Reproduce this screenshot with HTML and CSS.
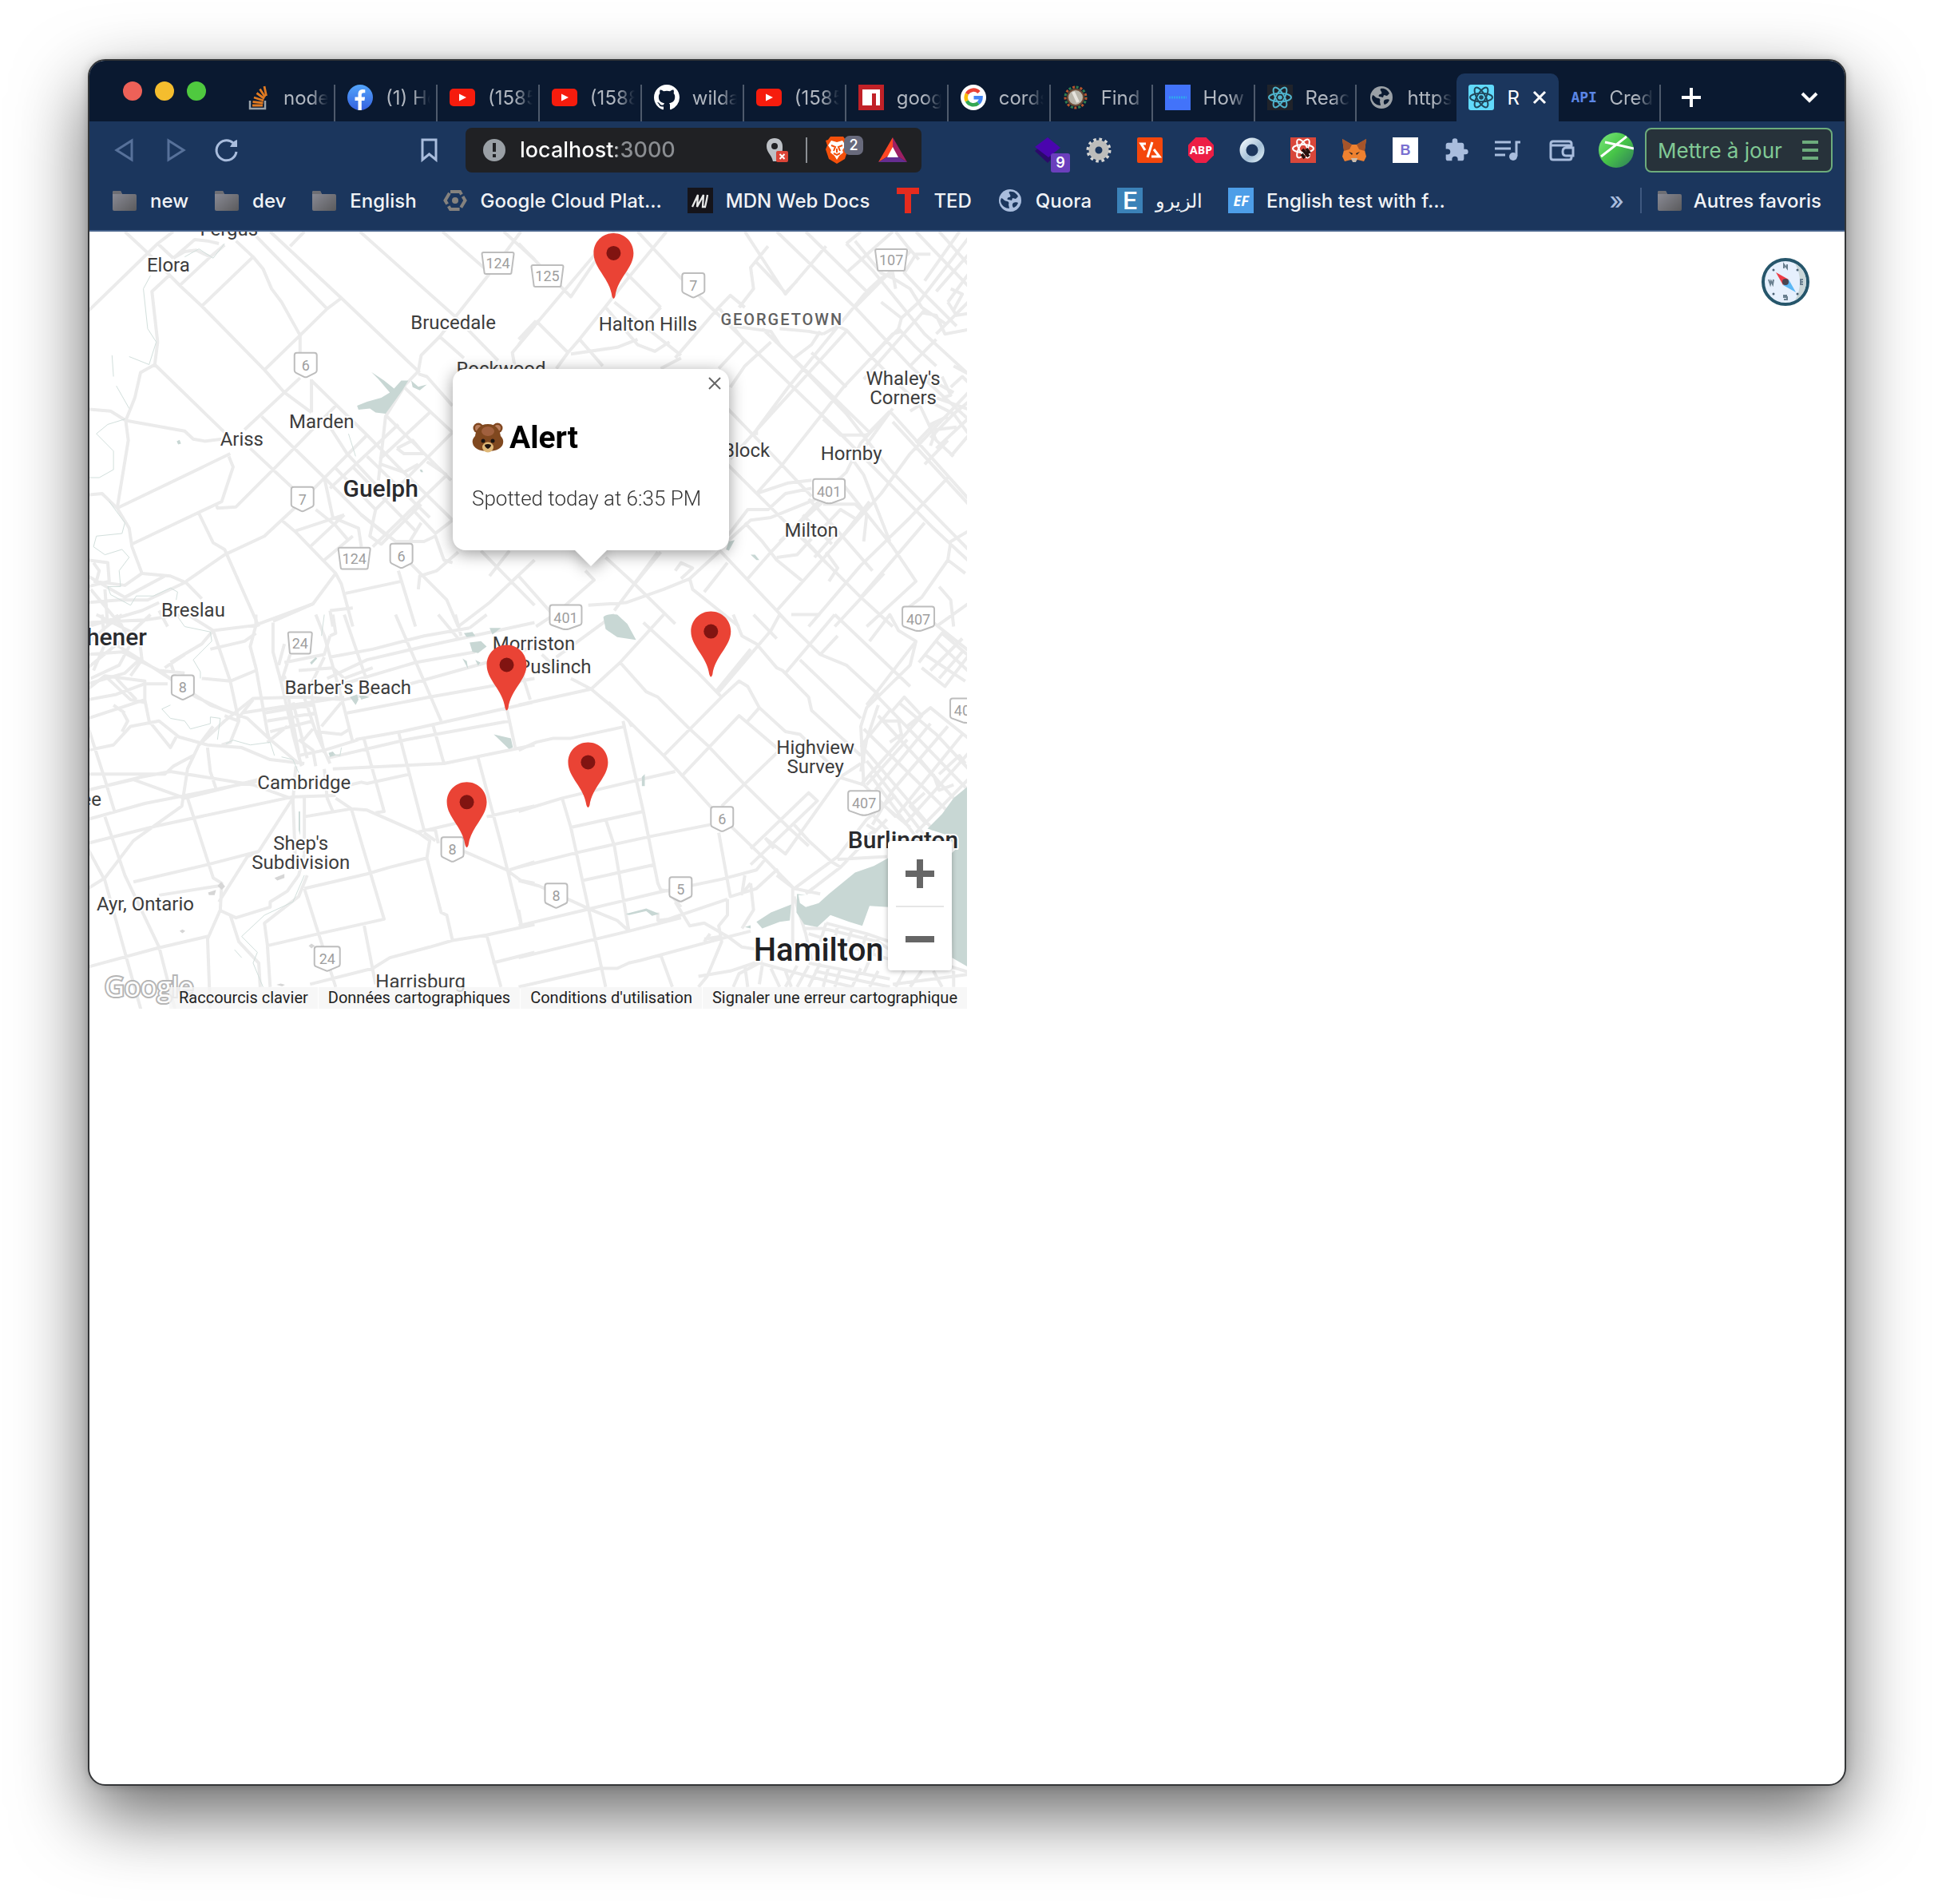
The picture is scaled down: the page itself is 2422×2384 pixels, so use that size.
FILE: index.html
```html
<!DOCTYPE html>
<html lang="fr">
<head>
<meta charset="utf-8">
<meta name="viewport" content="width=device-width">
<title>React App</title>
<link rel="stylesheet" href="styles.css">
</head>
<body>
<svg class="defs" aria-hidden="true">
  <defs>
    <linearGradient id="g-folder" x1="0" y1="0" x2="1" y2="1"><stop offset="0" stop-color="#8d8e99"/><stop offset="1" stop-color="#5a5a5c"/></linearGradient>
    <linearGradient id="g-fb" x1="0" y1="0" x2="0" y2="1"><stop offset="0" stop-color="#52a5fb"/><stop offset="1" stop-color="#3560e0"/></linearGradient>
    <linearGradient id="g-green" x1="0" y1="0" x2="1" y2="1"><stop offset="0" stop-color="#7be87c"/><stop offset=".5" stop-color="#47c548"/><stop offset="1" stop-color="#2f7a5c"/></linearGradient>
    <linearGradient id="g-ring" x1="0" y1="0" x2="1" y2="1"><stop offset="0" stop-color="#eaf3f9"/><stop offset=".6" stop-color="#a3bfd6"/><stop offset="1" stop-color="#d5e6f0"/></linearGradient>
    <symbol id="i-folder" viewBox="0 0 32 32"><path d="M1 6q0-2 2-2h8l2 4h16q2 0 2 2v17q0 2-2 2H3q-2 0-2-2z" fill="url(#g-folder)"/><path d="M1 8V6q0-2 2-2h8l2 4z" fill="#6d6e74"/></symbol>
    <symbol id="i-youtube" viewBox="0 0 32 32"><rect y="5" width="32" height="22" rx="5" fill="#f61c0d"/><path d="M12 11.500l9 4.500-9 4.500z" fill="#fff"/></symbol>
    <symbol id="i-react" viewBox="0 0 32 32"><g fill="none" stroke="currentColor" stroke-width="2"><ellipse cx="16" cy="16" rx="14" ry="5.300" transform="rotate(0 16 16)"/><ellipse cx="16" cy="16" rx="14" ry="5.300" transform="rotate(60 16 16)"/><ellipse cx="16" cy="16" rx="14" ry="5.300" transform="rotate(120 16 16)"/></g><circle cx="16" cy="16" r="2.800" fill="currentColor"/></symbol>
    <symbol id="i-globe" viewBox="0 0 32 32"><circle cx="16" cy="16" r="14" fill="currentColor"/><path d="M5 13c3 1 4 4 7 4 2 0 3 2 2 4l1 5c-6 0-11-5-11-10zM15 5c5-1 9 2 11 6l-3 3-4-1-1 3-4-1c-2 0-2-2 0-3 2 0 3-1 2-3s-2-2-1-4zM20 19c2-1 5-1 6 0-1 3-3 5-6 6-1-1-2-4 0-6z"/></symbol>
    <path id="pin" d="M0 0C-14 0-25 11-25 25C-25 44-5 56-2 79Q-1 82 0 82Q1 82 2 79C5 56 25 44 25 25C25 11 14 0 0 0Z"/>
    <path id="s1" d="M-14 3q0-3 3-3h22q3 0 3 3v19q0 2-2 3l-10 5q-2 1-4 0l-10-5q-2-1-2-3z"/>
    <path id="s2" d="M-16 3q0-3 3-3h26q3 0 3 3v19q0 2-2 3l-12 5q-2 1-4 0l-12-5q-2-1-2-3z"/>
    <path id="s3" d="M-20 3q0-3 3-3h34q3 0 3 3v19q0 2-2 3l-14 5q-4 1-8 0l-14-5q-2-1-2-3z"/>
    <path id="t2" d="M-15 2q0-2 2-2h26q2 0 2 2l-2 23q0 2-2 2h-22q-2 0-2-2z"/>
    <path id="t3" d="M-20 2q0-2 2-2h36q2 0 2 2l-3 23q0 2-2 2h-30q-2 0-2-2z"/>
  </defs>
</svg>

<div class="window">
  <header class="chrome">
    <div class="tabstrip">
      <div class="lights"><button class="light red" aria-label="Fermer"></button><button class="light yellow" aria-label="Réduire"></button><button class="light green" aria-label="Agrandir"></button></div>
      <nav class="tabs" aria-label="Onglets">
        <a class="tab" href="#"><svg class="icon" viewBox="0 0 32 32"><path d="M6 20v10h19V20" fill="none" stroke="#9ba3aa" stroke-width="2.500"/><g stroke="#e07a22" stroke-width="2.800"><path d="M9 26h13M9.500 21.500l13 1.300M11 16l12 4M14.500 10.500l9.500 7M18.500 5.500l6.500 10M24 2l2.500 12"/></g></svg><span>node.js</span></a>
        <a class="tab" href="#"><svg class="icon" viewBox="0 0 32 32"><circle cx="16" cy="16" r="16" fill="url(#g-fb)"/><path d="M13.500 32V20H9.500v-4.500h4V12c0-4 2.300-6 5.800-6l3 .3v4h-2c-2 0-2.500 1-2.500 2.300v2.900h4.300l-.7 4.500h-3.600v12z" fill="#fff"/></svg><span>(1) Home</span></a>
        <a class="tab" href="#"><svg class="icon"><use href="#i-youtube"/></svg><span>(1585)</span></a>
        <a class="tab" href="#"><svg class="icon"><use href="#i-youtube"/></svg><span>(1588)</span></a>
        <a class="tab" href="#"><svg class="icon" viewBox="0 0 16 16"><path fill="#fff" d="M8 0C3.580 0 0 3.580 0 8c0 3.540 2.290 6.530 5.470 7.590.4.070.55-.17.55-.38 0-.19-.01-.82-.01-1.490-2.010.37-2.530-.49-2.690-.94-.09-.23-.48-.94-.82-1.130-.28-.15-.68-.52-.01-.53.63-.01 1.080.58 1.230.82.72 1.210 1.870.87 2.330.66.070-.52.28-.87.51-1.070-1.780-.2-3.640-.89-3.640-3.950 0-.87.31-1.590.82-2.150-.08-.2-.36-1.020.08-2.120 0 0 .67-.21 2.200.82.640-.18 1.320-.27 2-.27s1.360.09 2 .27c1.530-1.040 2.200-.82 2.200-.82.440 1.100.16 1.920.08 2.120.51.560.82 1.270.82 2.150 0 3.070-1.870 3.750-3.650 3.950.29.25.54.73.54 1.480 0 1.070-.01 1.930-.01 2.200 0 .21.15.46.55.38A8.010 8.010 0 0 0 16 8c0-4.420-3.580-8-8-8z"/></svg><span>wildash</span></a>
        <a class="tab" href="#"><svg class="icon"><use href="#i-youtube"/></svg><span>(1585)</span></a>
        <a class="tab" href="#"><svg class="icon" viewBox="0 0 32 32"><path fill="#c12127" d="M0 0h32v32H0z"/><path fill="#fff" d="M5 6h22v20h-5V11h-5v15H5z"/></svg><span>google-m</span></a>
        <a class="tab" href="#"><svg class="icon" viewBox="0 0 32 32"><circle cx="16" cy="16" r="16" fill="#fff"/><g fill="none" stroke-width="4.500"><path d="M23 9.500A9.500 9.500 0 0 0 7.800 11.500" stroke="#ea4335"/><path d="M7.800 11.500a9.500 9.500 0 0 0 0 9" stroke="#fbbc05"/><path d="M7.800 20.500A9.500 9.500 0 0 0 22.300 23" stroke="#34a853"/><path d="M22.300 23a9.500 9.500 0 0 0 3.200-6.800H16.500" stroke="#4285f4"/></g></svg><span>cords</span></a>
        <a class="tab" href="#"><svg class="icon" viewBox="0 0 32 32"><g stroke-width="3" stroke-dasharray="3 6.500" fill="none"><circle cx="16" cy="16" r="13" stroke="#b7552c"/><circle cx="16" cy="16" r="13" stroke="#2f7d4f" stroke-dashoffset="5"/></g><circle cx="16" cy="16" r="10" fill="#b9b6ab" stroke="#6b4a35" stroke-width="2"/><path d="M13 9l6 13" stroke="#e6e4dd" stroke-width="4"/></svg><span>Find L</span></a>
        <a class="tab" href="#"><svg class="icon" viewBox="0 0 32 32"><path fill="#4273fa" d="M0 0h32v32H0z"/><path d="M5 16h22" stroke="#31a6ee" stroke-width="3" stroke-dasharray="2 1"/></svg><span>How t</span></a>
        <a class="tab" href="#"><svg class="icon react-dark"><use href="#i-react"/></svg><span>React N</span></a>
        <a class="tab plain" href="#"><svg class="icon globe-gray"><use href="#i-globe"/></svg><span>https://</span></a>
        <a class="tab active" href="#" aria-current="page"><svg class="icon react-light"><use href="#i-react"/></svg><span>R</span><svg class="tab-close" viewBox="0 0 18 18"><path d="M2 2l14 14M16 2L2 16"/></svg></a>
        <a class="tab" href="#"><b class="icon api">API</b><span>Creden</span></a>
      </nav>
      <button class="newtab" aria-label="Nouvel onglet"><svg viewBox="0 0 26 26"><path d="M13 1v24M1 13h24"/></svg></button>
      <button class="tabmenu" aria-label="Liste des onglets"><svg viewBox="0 0 26 26"><path d="M4 8l9 9 9-9"/></svg></button>
    </div>

    <div class="toolbar">
      <div class="nav">
        <button class="tool dim" aria-label="Précédent"><svg viewBox="0 0 32 32"><path d="M25 4v24L6 16z"/></svg></button>
        <button class="tool dim" aria-label="Suivant"><svg viewBox="0 0 32 32"><path d="M7 4v24l19-12z"/></svg></button>
        <button class="tool" aria-label="Actualiser"><svg viewBox="0 0 32 32"><path d="M28 18A12.500 12.500 0 1 1 24 7"/><path d="M20 12l9 0V3q-5 1-9 9z" fill="currentColor" stroke="none"/></svg></button>
      </div>
      <button class="tool mark" aria-label="Ajouter aux favoris"><svg viewBox="0 0 32 32"><path d="M7 3h17v25l-8.500-7L7 28z"/></svg></button>
      <div class="urlbar">
        <svg class="info" viewBox="0 0 28 28"><circle cx="14" cy="14" r="14" fill="#9aa0a6"/><path d="M14 5v11M14 19v4" stroke="#202124" stroke-width="4"/></svg>
        <label class="sr" for="url">Adresse</label><input id="url" class="url" value="localhost:3000">
        <svg class="loc" viewBox="0 0 28 32"><path d="M11 1C5 1 1 5 1 11c0 8 6 10 8 19l5 0V20h6c1-3 1-5 1-9C21 5 17 1 11 1z" fill="#bdc1c6"/><circle cx="11" cy="11" r="4" fill="#202124"/><rect x="13" y="17" width="15" height="14" rx="2" fill="#db4437"/><path d="M17.500 21l6 6m0-6l-6 6" stroke="#fff" stroke-width="2"/></svg>
        <i class="rule"></i>
        <span class="brave"><svg viewBox="0 0 30 36"><path d="M7 1h16l3 4 3 1-2 6 2 5-4 12-10 6L5 29 1 17l2-5-2-6 3-1z" fill="#f4500b"/><path d="M8 6l7 2 7-2 4 6-4 6 1 3-5 4-3 5-3-5-5-4 1-3-4-6z" fill="#fff"/><path d="M8 12l5 2-2 5M22 12l-5 2 2 5M11 22l4 2 4-2M15 16v5" stroke="#f4500b" stroke-width="2" fill="none"/></svg><b>2</b></span>
        <svg class="bat" viewBox="0 0 36 32"><path d="M18 0L0 31l18-11z" fill="#ff4724"/><path d="M18 0l18 31-18-11z" fill="#9e1f63"/><path d="M0 31h36L18 20z" fill="#662d91"/><path d="M18 12l7 13H11z" fill="#fff"/></svg>
      </div>
      <div class="extensions">
        <button class="tool" aria-label="Extension 1"><svg viewBox="0 0 32 32"><path d="M0 17l6-5 16 14-6 6z" fill="#2b0a6b" stroke="none"/><path d="M16 0l16 13-15 12L0 12z" fill="#4a05ae" stroke="none"/></svg><b class="badge">9</b></button>
        <button class="tool" aria-label="Réglages"><svg viewBox="0 0 32 32"><circle cx="16" cy="16" r="13.500" stroke="#d6d6d4" stroke-width="4" stroke-dasharray="3.500 3.570"/><circle cx="16" cy="16" r="8.500" stroke="#bdbdbb" stroke-width="8"/></svg></button>
        <button class="tool" aria-label="Extension 3"><svg viewBox="0 0 32 32"><rect width="32" height="32" rx="2" fill="#f4470c" stroke="none"/><path d="M11 8H5l5 8M19 6l-6 19M18 24h10l-7-9" stroke="#fff" stroke-width="3"/></svg></button>
        <button class="tool" aria-label="Adblock Plus"><svg viewBox="0 0 32 32"><path d="M9.500 0h13L32 9.500v13L22.500 32h-13L0 22.500v-13z" fill="#ed1e45" stroke="none"/></svg><b class="abp">ABP</b></button>
        <button class="tool" aria-label="Extension 5"><svg viewBox="0 0 32 32"><circle cx="16" cy="16" r="11.500" stroke="url(#g-ring)" stroke-width="8"/></svg></button>
        <button class="tool" aria-label="React DevTools"><svg viewBox="0 0 32 32"><path fill="#d9473a" stroke="none" d="M0 0h32v32H0z"/><g stroke="#fff" stroke-width="2"><ellipse cx="16" cy="14" rx="13" ry="5"/><ellipse cx="16" cy="14" rx="13" ry="5" transform="rotate(60 16 14)"/><ellipse cx="16" cy="14" rx="13" ry="5" transform="rotate(120 16 14)"/></g><path d="M15 15l8 9M14 21l4 5M20 14l4 6" stroke="#26100e" stroke-width="4"/></svg></button>
        <button class="tool" aria-label="MetaMask"><svg viewBox="0 0 32 32"><g stroke="none"><path d="M1 2l12 7h6l12-7-2 14 2 8-3 6-8-2-4 3-4-3-8 2-3-6 2-8z" fill="#ee8130"/><path d="M1 2l12 7-3 6-7 2zM31 2L19 9l3 6 7 2z" fill="#a5542a"/><path d="M9 18l5 2-1 2zM23 18l-5 2 1 2z" fill="#222"/><path d="M12 26h8l-2 5h-4z" fill="#c9bcae"/></g></svg></button>
        <button class="tool" aria-label="Extension 8"><b class="b-ext">B</b></button>
        <button class="tool" aria-label="Extensions"><svg viewBox="0 0 24 24"><path fill="currentColor" stroke="none" d="M20.500 11H19V7c0-1.100-.9-2-2-2h-4V3.500a2.500 2.500 0 0 0-5 0V5H4c-1.100 0-2 .9-2 2v3.800h1.500a2.700 2.700 0 0 1 0 5.400H2V20c0 1.100.9 2 2 2h3.800v-1.500a2.700 2.700 0 0 1 5.400 0V22H17c1.100 0 2-.9 2-2v-4h1.500a2.500 2.500 0 0 0 0-5z"/></svg></button>
        <button class="tool" aria-label="Médias"><svg viewBox="0 0 32 32"><path d="M0 6h20M0 14h20M0 22h13M27 24V6h5" stroke-width="3"/><circle cx="23" cy="24" r="5" fill="currentColor" stroke="none"/></svg></button>
        <button class="tool wallet" aria-label="Portefeuille"><svg viewBox="0 0 32 32"><path d="M28 11V8q0-3-3-3H5Q2 5 2 8v17q0 3 3 3h20q3 0 3-3v-2M3 10h22q3 0 3 2M21 13h9v10h-9q-4 0-4-5t4-5z"/></svg></button>
        <button class="profile" aria-label="Profil"><svg viewBox="0 0 44 44"><circle cx="22" cy="22" r="22" fill="url(#g-green)"/><path d="M3 30L35 5M8 12l36 8" stroke="#fff" stroke-width="3"/></svg></button>
        <button class="update">Mettre à jour<svg viewBox="0 0 20 24"><path d="M0 2h20M0 12h20M0 22h20"/></svg></button>
      </div>
    </div>

    <nav class="bookmarks" aria-label="Favoris">
      <a href="#"><svg class="icon"><use href="#i-folder"/></svg>new</a>
      <a href="#"><svg class="icon"><use href="#i-folder"/></svg>dev</a>
      <a href="#"><svg class="icon"><use href="#i-folder"/></svg>English</a>
      <a href="#"><svg class="icon" viewBox="0 0 32 32"><path d="M10 5h12l6.500 11L22 27H10L3.500 16z" fill="none" stroke="#85827e" stroke-width="4" stroke-dasharray="16 3"/><circle cx="16" cy="16" r="4" fill="#85827e"/></svg>Google Cloud Plat...</a>
      <a href="#"><svg class="icon" viewBox="0 0 32 32"><path fill="#15141a" d="M0 0h32v32H0z"/><path d="M6 24l7-15-1 15 8-15-1 15h3q2-8 3-15" fill="none" stroke="#e8e8e8" stroke-width="2.300"/></svg>MDN Web Docs</a>
      <a href="#"><svg class="icon" viewBox="0 0 32 32"><path d="M2 0h28v8H20v24h-8V8H2z" fill="#e62b1e"/></svg>TED</a>
      <a href="#"><svg class="icon globe-blue"><use href="#i-globe"/></svg>Quora</a>
      <a href="#"><b class="icon e-ico">E</b><span lang="ar" dir="rtl">الزيرو</span></a>
      <a href="#"><b class="icon ef-ico">EF</b>English test with f...</a>
      <button class="more" aria-label="Plus de favoris">»</button>
      <a class="others" href="#"><svg class="icon"><use href="#i-folder"/></svg>Autres favoris</a>
    </nav>
  </header>

  <main class="page">
    <section class="map" aria-label="Carte">
      <svg class="canvas" viewBox="0 0 1100 974" preserveAspectRatio="xMidYMid slice">
        <g class="roads">
          <!-- north-west quarter: Elora, Guelph -->
          <g transform="matrix(.3571 0 0 .3333 -2 -5)">
            <path d="M0 315L245 60L300 15M130 15L215 100L325 220L400 295L620 535L690 620L785 695M245 60L300 115M285 180L225 240L245 430L235 515L185 545L165 640L133 725L142 800L103 1055L145 1130L155 1200L190 1300L290 1310L345 1335L400 1395M300 115L375 45L420 50L460 60M325 215L430 110L480 65M300 115L340 90L380 85L430 110M400 295L580 110M520 50L580 110L615 155L645 230L680 280L745 405L745 470M575 15L840 305L890 265L640 15M890 265L1165 545M620 535L745 405L840 305M710 70L760 15M955 15L1290 335L1440 500M1245 15L1400 160M1460 15L1568 120M1520 15L1405 180L1235 410L1170 480L1160 540L1115 590L1045 710L1020 950M1235 410L1320 490M1568 370L1490 470L1500 530M235 515L480 770M0 683L80 690L133 725L340 765L370 795L410 803L470 795M550 760L745 565M785 570L785 695M785 575L980 780L1090 900L1280 1100M610 710L830 940L960 1080L1050 1160M850 750L910 850L1010 965M570 830L725 985M103 1055L500 850M495 860L510 900L470 1030L155 1190M870 670L655 905L520 1050L455 1055L450 1035M390 1075L440 1185L480 1210L600 1500M680 1100L730 1145L870 1300L890 1340L930 1500M345 1330L480 1230L620 1160L720 1060L850 920L980 780M870 1300L790 1415L600 1490M905 1375L1100 1330M1090 1290L1150 1500M1130 1260L1260 1400L1300 1500M1160 1360L1165 1310L1225 1290L1300 1220M1380 1215L1568 1420M1300 1500L1410 1410L1568 1250M1480 1215L1410 1310"/>
            <path d="M1110 600L1280 770M1050 710L1275 950M1090 740L850 980M1200 695L1025 870M980 860L1200 1090M930 900L1150 1140M1280 770L1010 1060M1260 930L1000 1200M1085 830L1140 800L1180 850L1110 850L1085 830M1160 550L1190 560L1280 670M870 905L1010 1060L990 1160L1030 1190L1170 1040M830 940L860 1090L950 1130L960 1200M800 1060L870 1120L910 1170M900 1080L730 1140M780 1200L900 1080M1030 890L1110 920L1160 890M830 1250L930 1160M1190 880L1260 930M960 1080L1080 1180L1180 1180L1220 1160L1250 1250L1280 1260M1140 1060L1220 1150L1280 1100M1130 1180L1170 1110M0 1250L70 1260L75 1330L0 1350M190 1300L130 1345L20 1330M20 1260L40 1290L30 1330M0 1310L130 1390L270 1310M60 1360L70 1500M0 1410L110 1400L210 1400L340 1335M0 1500L190 1440L250 1410M10 1360L120 1500M250 1440L280 1500M850 1440L930 1430M850 1440L860 1500M650 1480L790 1415M0 1005L50 1000L103 1055"/>
          </g>
          <!-- north-east quarter: Georgetown, Milton -->
          <g transform="matrix(.3635 0 0 .3333 538 -5)">
            <path d="M0 60L180 260L330 20M0 440L310 40L330 15M410 15L560 190L780 425L1060 720L1430 1130L1568 1270M510 15L370 200L210 420L170 470L60 350M60 350L0 420M170 470L130 530M180 475L340 450L410 420M210 420L290 520M370 170L490 300M300 300L410 440L470 465L520 430M330 280L560 480M490 300L430 370M540 490L690 300L730 255L780 300M690 300L780 430M490 530L560 490M780 15L920 250L1060 70M860 70L800 150L810 230L760 300M820 130L920 245L960 200M890 15L1160 300L1350 520L1560 730M990 15L1200 240M780 425L690 530M870 430L780 520L730 600M740 370L870 390L900 440L1130 700L1280 910L1568 1230M840 380L1060 610L1210 770M900 380L1000 390L1050 400M1010 470L1130 600M1040 390L1010 440L950 490M1130 390L730 870M1050 400L1100 370L1130 385L1220 490L1310 590M1200 240L930 600L820 760L820 780M1310 380L1120 600L910 890L820 1000M1400 310L1190 570M1220 480L1290 400L1320 390M720 680L880 860L1010 1010M1160 300L1350 90M1280 690L1200 780L1110 780L1050 720M1280 690L1180 810L1130 920L1080 970M1290 680L1190 830M1280 690L1568 1040M1290 730L1568 1060M720 890L1180 1390L1290 1500M820 1000L930 960L1010 950M720 1160L790 1060L860 1060L920 1000L1010 980M720 1180L800 1100L870 1090L960 1050L1050 1010M780 1110L840 1180L890 1250L980 1330M300 1240L400 1340L540 1490M230 1290L260 1325L130 1450L60 1500M0 1310L130 1470M480 1220L330 1440M240 1420L370 1410L500 1360L590 1320L690 1220M540 1290L560 1260L600 1280L560 1320M590 1320L600 1360L760 1500M690 1210L890 1440L940 1500M640 1370L720 1260M400 1340L490 1220M790 1320L870 1220L1060 1000M890 1440L1250 1000L1350 850L1568 600M980 1330L1110 1170L1210 1030M1000 1500L1180 1270L1350 1090L1480 940M1090 1500L1260 1300M1180 1390L1400 1110M1100 940L1290 1200L1370 1330L1200 1500M1480 1250L1390 1390L1330 1440M1540 1300L1480 1250L1490 1180L1568 1130M1450 1350L1490 1400L1500 1500M1568 1400L1440 1500M1150 870L1190 930L1280 1180"/>
            <path d="M1130 60L1180 15M1130 60L1220 160L1400 400L1560 560M1160 50L1250 170L1290 190L1350 230L1390 300L1470 360M1130 170L1290 15M1200 240L1250 190L1290 170L1300 230M1380 120L1340 70L1300 15M1420 100L1370 100L1330 170L1390 240L1510 370M1370 15L1568 240M1450 15L1568 160M1520 15L1400 200M1568 80L1440 240M1568 150L1480 280M1250 280L1320 340L1380 280L1568 15M1320 340L1310 380L1370 450L1440 520M1390 320L1440 330L1470 400L1568 380M1440 400L1568 260M1480 280L1510 330L1568 320M1490 230L1530 250L1500 310M1350 520L1440 420M1400 560L1500 620M1310 590L1380 660L1440 800L1500 860M1350 690L1410 650L1500 700L1568 640M1420 740L1480 710M1420 790L1500 700L1568 800M1440 830L1568 700M1490 860L1568 760M1370 810L1440 730M1400 890L1480 800M1500 520L1568 560M1460 560L1490 630L1460 640M1440 640L1568 690M1490 600L1530 560L1568 600M1420 820L1440 760L1510 750M1000 1020L1100 1140L1220 1290M980 1080L1080 1190M950 1130L1060 1260M1050 1040L1160 1040L1200 1080L1190 1180M1040 1140L1110 1060L1170 1100M900 1180L1000 1080L1060 1020M890 1240L960 1230L1010 1170M1090 1190L1150 1120M1060 1220L1100 1280L1070 1330M1100 1140L1020 1240"/>
          </g>
          <!-- south-west quarter: Kitchener, Cambridge -->
          <g transform="matrix(.3571 0 0 .3333 -2 480)">
            <path d="M0 660L190 610L290 590L580 640L710 690M0 660L160 620L340 690L600 620M0 770L200 710L600 625M0 860L240 795L720 685L870 680M0 1030L60 990L160 850L330 720L350 580L390 490L480 400L580 315L750 310L900 320L1100 270L1400 180L1568 120M0 510L90 490L150 420L250 400L320 460L420 490L540 500L640 545L760 560M0 390L200 320L200 250L60 230L0 280M200 320L215 400L290 500L310 460M0 420L60 620L95 745M60 760L130 980L250 1250L310 1500M0 880L60 1000L190 1500M160 1005L420 940L600 890L720 690M0 1325L240 1255L420 1210L430 1500M350 690L440 990L470 1010L465 1110L420 1220M460 1110L520 1140L640 1100L640 1080L700 1040L740 980L760 900L760 690M250 1055L460 1020M460 1080L560 910L600 890M420 500L430 590L450 655M0 600L270 600L300 570L370 530M630 1245L810 1200L1040 1145L925 730L760 760M640 1400L630 1240L620 1160L740 1060L770 980M500 1130L530 1230L600 1310L605 1400M760 1030L980 975L1060 950L1190 915L1200 850L1160 820L980 735L925 730L870 690M760 1030L810 1200L870 1400M780 1390L1000 1330L1060 1290L1200 1250L1280 1225L1400 1205L1568 1165M1190 915L1240 1120L1260 1130L1280 1225M970 1170L1010 1390M1400 1205L1450 1400M1420 1310L1568 1270M1150 820L1350 770M970 470L1040 740L1010 745M1090 440L1180 810L1220 810L1230 860M1320 890L1470 960L1520 1000L1568 1010M1480 960L1568 930M1370 540L1450 860L1520 1165M1400 760L1568 720M1210 410L1250 560M840 540L1120 470L1480 400M860 580L1250 560L1568 490M940 470L1100 440L1560 330M910 370L1200 310L1568 240M1470 350L1500 500M920 640L960 630L980 635L1130 600M740 530L830 510L950 470M930 480L890 310L830 80L800 0M850 160L1000 130L1180 80L1340 50M870 270L960 240L1150 180L1360 140M900 0L980 250M1080 0L1240 400M1230 0L1300 90M1290 0L1310 80M840 240L980 170L1180 120L1568 30M1340 50L1400 0"/>
            <path d="M590 40L570 120L590 200L630 440L640 480M650 30L650 140L680 260L720 450L750 570M350 0L440 60L500 250L530 400L500 480L470 490M0 60L110 120L230 200L430 340L560 390L640 470L740 560M0 150L120 140L250 210L380 310L480 360M0 200L80 130L160 60L220 0M0 110L60 50L120 0M30 0L180 80L190 170L150 230M0 30L200 20L330 0M50 0L60 110L20 210M100 0L150 110L110 190L10 240M0 260L130 220L180 170M60 230L150 320L200 330M100 240L170 320M0 320L100 300L200 260L280 260M290 180L400 110L440 60L590 40L590 0M290 180L310 240M250 210L340 220M340 150L270 200M430 130L550 100L590 70M400 240L500 250L590 210M540 370L900 310M520 400L580 320M620 370L730 350L790 340M630 400L800 370M640 440L790 400M690 230L740 520M720 330L770 540M750 280L800 440L850 560M780 280L830 520M680 250L710 150M690 180L830 150L850 80M740 210L860 200L900 240L1000 200M800 440L890 450L920 430M820 420L890 330M750 480L790 430M740 470L790 510L800 570M630 480L700 420M690 110L670 190M850 80L870 70L860 0M830 160L780 270M900 240L870 310M840 690L860 740M730 570L720 700L730 960M830 580L840 690M120 360L140 400L120 440M90 340L130 370M440 420L390 490M530 400L480 380M1180 820L1220 850"/>
          </g>
          <!-- south-east quarter: Hamilton, Burlington -->
          <g transform="matrix(.3635 0 0 .3333 538 480)">
            <path d="M0 340L250 280L350 180L500 0M0 180L40 320M180 240L250 280L370 390L500 530L560 600L660 720L850 920L950 1030M80 150L130 200M130 160L330 0M0 510L60 480L120 465L180 465L370 420M360 400L430 740L480 1010L490 1035L520 1040M310 330L380 400L390 420M0 740L150 690L420 620L540 590M150 690L180 800L430 740M300 770L330 870L380 1190M180 800L300 1400M0 950L200 895L450 835L660 790M220 1000L470 940M0 1000L70 1020L250 1110L340 1150L380 1190M0 1170L230 1110L480 1045L700 995L820 960L850 920M0 1290L380 1190L560 1140M0 1400L280 1330L340 1330L380 1310L420 1300L710 1215L800 1190M0 1110L10 1170M430 30L620 220L700 310L500 530M350 180L440 290L480 310L590 430L650 490L780 640L930 800M700 310L760 250L790 270L830 350L790 400M830 350L920 440L970 450L1080 570M690 290L870 60L900 0M740 0L770 80L820 110L890 200L910 210L1000 310L1010 360L1180 530M560 610L760 380L900 510L700 720M680 290L800 130M920 220L1090 0M810 0L890 90M900 0L1040 150L1130 190L1240 300M970 170L1180 390M1090 0L1350 270M1210 100L1280 0L1310 60L1370 100L1350 190L1200 350L1180 420L1190 640M940 0L1040 0M1040 150L1100 80M690 820L730 1060L820 1030L890 960L900 980M800 880L1000 670L1030 700L800 940M850 840L880 880M950 790L1000 850L1080 930L1110 950M950 1030L1100 910L1200 770L1300 680M990 1050L1110 950L1270 770M780 980L770 1050L800 1010M800 1010L810 1110L770 1180M560 1100L530 1060M540 1080L590 1170L640 1160L720 1210L770 1250L830 1260M480 1160L530 1140L720 1070M480 1120L480 1150L560 1140M720 1070L720 1130L690 1170L700 1230L650 1360L620 1400M490 1280L520 1370L530 1400M620 1360L730 1340L840 1300M640 1220L700 1210M660 1200L640 1230M930 800L1000 870M890 980L950 1030M945 1030L945 1220L950 1300M950 1060L990 1200L1010 1300M950 1030L1040 1050M850 840L920 900L1110 610L1180 560M1190 640L1100 610M1100 920L1270 910"/>
            <path d="M1380 180L1460 70L1568 170M1400 150L1540 250M1440 100L1568 230M1420 210L1530 90M1390 200L1470 270L1568 130M1450 240L1530 140M1370 100L1200 340M1430 30L1568 150M1230 300L1568 680M1240 340L1200 470L1180 590M1280 360L1190 480L1190 560M1310 330L1440 450L1568 600M1340 420L1420 350L1568 480M1240 380L1500 690M1190 430L1480 740M1180 490L1430 810M1200 550L1400 830M1210 600L1380 850M1290 360L1330 310L1390 380L1180 640M1340 470L1200 640M1420 410L1230 660M1480 420L1290 660L1220 790M1530 450L1300 760M1568 500L1330 790M1568 600L1370 820M1250 400L1310 400L1320 450L1280 480M1430 600L1450 660L1500 640M1450 600L1520 530L1540 560M1380 540L1450 630M1400 670L1350 720L1400 780M1240 700L1350 800M1210 740L1300 840M1190 640L1300 760M1200 790L1230 810L1190 840M980 1180L1050 1180L1240 1230L1280 1260M1060 1160L1200 1200L1280 1230M1060 1160L1040 1230M1100 1170L1080 1270M1150 1180L1120 1280M1200 1200L1170 1300M1240 1220L1190 1350M740 1400L760 1350L830 1310L1000 1360L1150 1400M780 1320L790 1400M840 1320L830 1390M870 1330L900 1400M920 1340L940 1400M960 1320L920 1400M1000 1320L960 1400M1040 1310L1000 1400M1070 1320L1050 1400M1110 1330L1090 1400M1000 1310L1280 1370M1020 1340L1280 1400M1180 1330L1150 1400M1240 1340L1210 1400M1330 1340L1300 1400M1390 1340L1350 1400M1480 1320L1568 1350M1430 1340L1460 1400M1500 1340L1500 1400M1290 1390L1568 1350M1000 1200L1290 1300"/>
          </g>
        </g>
        <g class="water">
          <g transform="matrix(.3571 0 0 .3333 -2 -5)"><path d="M945 670L980 655L1030 640L1060 620L1020 570L995 543L1040 575L1075 605L1100 575L1125 575L1105 610L1045 700L1010 695L990 680L950 685ZM1135 575L1160 598L1190 590L1165 612L1140 600ZM312 803l10-5 5 14-10 3zM1165 910l8 0 4 10-8 0z"/></g>
          <g transform="matrix(.3635 0 0 .3333 538 -5)"><path d="M292 1465Q300 1450 340 1455L375 1490L405 1550L340 1540L300 1510ZM715 1210L725 1180L745 1175L725 1215ZM800 1230l15 0 15 20-10 0z"/></g>
          <g transform="matrix(.3571 0 0 .3333 -2 480)"><path d="M1425 450L1485 465L1492 500L1478 505ZM1340 105L1380 100L1400 120L1370 145L1350 140ZM1320 70L1350 65L1360 80L1330 85ZM1315 165L1330 175L1335 205ZM1360 170L1378 180L1370 192ZM1410 50L1450 50L1420 75ZM780 180L800 160L805 165L785 188ZM845 520L860 515L870 528L850 535ZM920 310L945 300L950 320L940 340ZM950 300L990 310L960 320ZM740 740h5v90l-5-20z"/><path class="land" d="M455 1020L468 1005L482 1022L470 1034ZM422 1045L450 1035L445 1055L425 1055ZM655 990L690 975L690 990L665 1000ZM775 1245l10-8 12 8-12 10zM322 1190l10-6 10 6-10 8zM662 1392l15-5 15 5-10 6z"/></g>
          <g transform="matrix(.3635 0 0 .3333 538 480)"><path d="M1568 640L1550 645L1500 690L1460 750L1410 805L1480 830L1510 880L1490 900L1495 1290L1550 1325L1568 1325ZM1275 915L1225 945L1160 970L1070 1050L1035 1085L990 1100L970 1085L965 1055L990 1055L960 1050L958 1120L985 1165L1030 1175L1075 1130L1140 1155L1185 1170L1210 1095L1275 1100ZM940 1090L870 1120L820 1155L840 1180L900 1155L935 1150ZM780 1175l20-7 0 12zM370 1125L440 1105L485 1125L460 1133L440 1115L380 1130ZM425 610l10-10 0 45-10 0z"/></g>
        </g>
        <g class="streams">
          <g transform="matrix(.3571 0 0 .3333 -2 -5)"><path d="M220 180L195 230L210 380L240 430L215 515L145 485M85 480L90 560M100 595L145 680M130 720L70 740L30 775L90 840L90 910L40 940L0 940M75 1030L130 1110L120 1150L30 1160L20 1200L60 1230L120 1210L145 1240L110 1290L115 1350L70 1350L80 1380L150 1420L170 1385L230 1385L290 1355L315 1370L310 1400M915 775L940 860M340 110L390 80L440 115L480 60"/></g>
          <g transform="matrix(.3571 0 0 .3333 -2 480)"><path d="M310 0L340 45L430 65L435 100L370 170L395 215L395 240M290 340L260 355L290 390L340 400L360 430L430 410L430 385L465 390L455 470M485 485L510 472L570 490L640 480L655 530M680 535L720 545L740 595M890 500L885 530L860 525M760 980L720 1080L620 1130L540 1210L595 1270L580 1310L615 1400M515 1260L540 1290M830 0L820 80"/></g>
        </g>
        <g class="shields">
          <g><use href="#s1" x="271" y="152"/><text x="271" y="174">6</text></g>
          <g><use href="#s1" x="267" y="320"/><text x="267" y="342">7</text></g>
          <g><use href="#t3" x="332" y="396"/><text x="332" y="416">124</text></g>
          <g><use href="#s1" x="391" y="391"/><text x="391" y="413">6</text></g>
          <g><use href="#t3" x="512" y="26"/><text x="512" y="46">124</text></g>
          <g><use href="#t3" x="574" y="42"/><text x="574" y="62">125</text></g>
          <g><use href="#s1" x="757" y="52"/><text x="757" y="74">7</text></g>
          <g><use href="#t3" x="1005" y="22"/><text x="1005" y="42">107</text></g>
          <g><use href="#s3" x="927" y="310"/><text x="927" y="332">401</text></g>
          <g><use href="#s3" x="597" y="468"/><text x="597" y="490">401</text></g>
          <g><use href="#s3" x="1039" y="470"/><text x="1039" y="492">407</text></g>
          <g><use href="#t2" x="264" y="502"/><text x="264" y="522">24</text></g>
          <g><use href="#s1" x="117" y="556"/><text x="117" y="578">8</text></g>
          <g><use href="#s1" x="455" y="759"/><text x="455" y="781">8</text></g>
          <g><use href="#s2" x="298" y="896"/><text x="298" y="918">24</text></g>
          <g><use href="#s3" x="1099" y="585"/><text x="1099" y="607">407</text></g>
          <g><use href="#s3" x="971" y="701"/><text x="971" y="723">407</text></g>
          <g><use href="#s1" x="793" y="721"/><text x="793" y="743">6</text></g>
          <g><use href="#s1" x="585" y="817"/><text x="585" y="839">8</text></g>
          <g><use href="#s1" x="741" y="809"/><text x="741" y="831">5</text></g>
        </g>
        <g class="places">
          <text x="175" y="5">Fergus</text><text x="99" y="50">Elora</text><text x="456" y="122">Brucedale</text><text x="516" y="180">Rockwood</text>
          <text x="291" y="246">Marden</text><text x="191" y="268">Ariss</text><text x="130" y="482">Breslau</text><text x="700" y="124">Halton Hills</text>
          <text x="1020" y="192">Whaley's</text><text x="1020" y="216">Corners</text><text x="853" y="282" class="end">Block</text><text x="955" y="286">Hornby</text>
          <text x="905" y="382">Milton</text><text x="324" y="580">Barber's Beach</text><text x="269" y="699">Cambridge</text><text x="15" y="720" class="end">ee</text>
          <text x="265" y="775">Shep's</text><text x="265" y="799">Subdivision</text><text x="70" y="851">Ayr, Ontario</text><text x="415" y="948">Harrisburg</text>
          <text x="557" y="524">Morriston</text><text x="629" y="554" class="end">Puslinch</text><text x="910" y="655">Highview</text><text x="910" y="679">Survey</text>
          <text x="868" y="117" class="district">GEORGETOWN</text>
          <text x="365" y="332" class="town">Guelph</text><text x="72" y="518" class="town end">Kitchener</text><text x="1020" y="773" class="town">Burlington</text>
          <text x="914" y="914" class="city">Hamilton</text>
        </g>
        <text class="brand" x="19" y="959">Google</text>
        <g class="pins">
          <g transform="translate(657 2)"><use href="#pin"/><circle cy="25" r="9"/></g>
          <g transform="translate(779 476)"><use href="#pin"/><circle cy="25" r="9"/></g>
          <g transform="translate(523 518)"><use href="#pin"/><circle cy="25" r="9"/></g>
          <g transform="translate(625 640)"><use href="#pin"/><circle cy="25" r="9"/></g>
          <g transform="translate(473 690)"><use href="#pin"/><circle cy="25" r="9"/></g>
        </g>
      </svg>

      <article class="info-window">
        <button class="close" aria-label="Fermer"><svg viewBox="0 0 16 16"><path d="M1 1l14 14M15 1L1 15"/></svg></button>
        <h2><svg class="bear" viewBox="0 0 40 38"><circle cx="8" cy="7" r="6.500" fill="#80461f"/><circle cx="32" cy="7" r="6.500" fill="#80461f"/><circle cx="8" cy="7" r="4" fill="#b97e5c"/><circle cx="32" cy="7" r="4" fill="#b97e5c"/><path d="M20 2C9 2 5 10 4 17C2 19 0 22 1 26C2 32 9 36 20 36S38 32 39 26C40 22 38 19 36 17C35 10 31 2 20 2Z" fill="#80481f"/><ellipse cx="20" cy="11" rx="8" ry="6" fill="#a0603e"/><ellipse cx="20" cy="31" rx="7" ry="6.500" fill="#dfb878"/><circle cx="14" cy="23" r="2.500" fill="#1c1410"/><circle cx="26" cy="23" r="2.500" fill="#1c1410"/><path d="M16 28q4-2 8 0q0 3-4 5q-4-2-4-5z" fill="#20140f"/></svg>Alert</h2>
        <p>Spotted today at 6:35 PM</p>
      </article>

      <div class="zoom">
        <button aria-label="Zoom avant"><svg viewBox="0 0 36 36"><path d="M18 0v36M0 18h36"/></svg></button>
        <button aria-label="Zoom arrière"><svg viewBox="0 0 36 36"><path d="M0 18h36"/></svg></button>
      </div>

      <footer class="legal"><button>Raccourcis clavier</button><button>Données cartographiques</button><a href="#">Conditions d'utilisation</a><a href="#">Signaler une erreur cartographique</a></footer>
    </section>

    <button class="compass" aria-label="Ma position"><svg viewBox="0 0 60 60"><circle cx="30" cy="30" r="28" fill="#e6f0fd" stroke="#26566b" stroke-width="4"/><path d="M42 7a26 26 0 0 1 0 46c8-14 8-32 0-46z" fill="#c9d6d8"/><path d="M18 18L34 27 27 34z" fill="#ee3b45"/><path d="M43 43L34 27 27 34z" fill="#5cb8f5"/><circle cx="30" cy="30" r="4" fill="#4a4550"/><g stroke="#6a8090" stroke-width="2" fill="none"><path d="M28 13V8l4 5V8M32 47h-4v2h4v3h-4M52 27h-3v6h3M49 30h3M9 27l2 6 1-4 2 4 1-6"/></g><g fill="#4a6274"><circle cx="15" cy="15" r="1.500"/><circle cx="45" cy="15" r="1.500"/><circle cx="15" cy="45" r="1.500"/><circle cx="45" cy="45" r="1.500"/></g></svg></button>
  </main>
</div>
</body>
</html>
```
FILE: styles.css
```css
* { box-sizing: border-box; }
body {
  margin: 0;
  min-height: 100vh;
  display: flex;
  padding: 74px 110px 148px;
  background: #fff;
  font-family: Inter, "Noto Sans", sans-serif;
  font-size: 24px;
}
button { border: 0; padding: 0; background: none; font: inherit; color: inherit; cursor: pointer; }
a { color: inherit; text-decoration: none; }
svg { display: block; flex: none; }
.defs { position: absolute; width: 0; height: 0; }
.sr { position: absolute; width: 1px; height: 1px; overflow: hidden; clip-path: inset(50%); }

.window {
  flex: 1;
  min-width: 0;
  display: flex;
  flex-direction: column;
  overflow: hidden;
  border: 2px solid #333537;
  border-radius: 22px;
  background: #fff;
  box-shadow: 0 36px 90px rgba(0, 0, 0, .6), 0 0 12px rgba(0, 0, 0, .2);
}
.chrome { background: #1b365d; color: #f1f3f6; border-bottom: 2px solid #46618a; }

/* tabs */
.tabstrip { display: flex; align-items: flex-end; height: 76px; background: #0a1930; padding-right: 31px; }
.lights { display: flex; align-items: center; gap: 16px; flex: none; width: 180px; height: 76px; padding-left: 42px; }
.light { width: 24px; height: 24px; border-radius: 50%; }
.red { background: #ed6158; }
.yellow { background: #f4bd2e; }
.green { background: #4fc93f; }
.tabs { display: flex; min-width: 0; }
.icon { width: 32px; height: 32px; flex: none; }
.tab {
  flex: 0 1 128px;
  min-width: 0;
  display: flex;
  align-items: center;
  gap: 16px;
  height: 60px;
  padding: 0 9px 0 15px;
  color: #b1b7c0;
  background: linear-gradient(#4e5a6c, #4e5a6c) right bottom / 2px 46px no-repeat;
}
.tab span {
  flex: 1;
  min-width: 0;
  overflow: hidden;
  white-space: nowrap;
  -webkit-mask-image: linear-gradient(90deg, #000 60%, transparent);
  mask-image: linear-gradient(90deg, #000 60%, transparent);
}
.tab.plain { background: none; }
.tab.active { margin-left: -3px; background: #1b365d; border-radius: 10px 10px 0 0; color: #fff; padding-right: 15px; }
.tab.active span { -webkit-mask-image: none; mask-image: none; }
.tab-close { width: 18px; height: 18px; fill: none; stroke: #fff; stroke-width: 3; }
.react-dark { background: #20232a; color: #4fb3cc; }
.react-light { background: #61dafb; color: #20485c; border-radius: 3px; }
.globe-gray { color: #9aa0a6; fill: #0a1930; }
.globe-blue { color: #a9bddd; fill: #1b365d; }
.api { font: 700 18px/32px "DejaVu Sans Mono", monospace; color: #5b86e5; }
.newtab, .tabmenu { display: flex; align-items: center; height: 60px; }
.newtab { margin-left: 25px; }
.tabmenu { margin-left: auto; }
.newtab svg, .tabmenu svg { width: 26px; height: 26px; fill: none; stroke: #fff; stroke-width: 4; }

/* toolbar */
.toolbar {
  display: grid;
  grid-template-columns: auto minmax(0, 190fr) auto minmax(0, 571fr) minmax(0, 126fr) auto;
  align-items: center;
  height: 72px;
  padding: 0 15px 0 12px;
}
.nav { display: flex; }
.tool { position: relative; display: flex; align-items: center; justify-content: center; width: 64px; height: 56px; color: #a9bddd; }
.tool svg { width: 32px; height: 32px; fill: none; stroke: currentColor; stroke-width: 3; }
.dim { color: #57719a; }
.mark { grid-column: 3; margin-right: 13px; }
.urlbar { grid-column: 4; display: flex; align-items: center; height: 56px; padding: 0 18px 0 22px; border-radius: 8px; background: #202124; }
.info { width: 28px; height: 28px; }
.url {
  flex: 1;
  min-width: 0;
  margin-left: 18px;
  padding: 0;
  border: 0;
  outline: 0;
  font: 500 27px/36px Inter, sans-serif;
  color: transparent;
  background: linear-gradient(90deg, #fff 121px, #8b8e92 121px);
  -webkit-background-clip: text;
  background-clip: text;
}
.loc { width: 28px; height: 32px; }
.rule { width: 2px; height: 32px; margin: 0 22px; background: #8b8f94; }
.brave { display: flex; width: 48px; margin-right: 19px; }
.brave svg { width: 30px; height: 36px; }
.brave b { height: 24px; width: 24px; margin-left: -6px; border-radius: 7px; background: #686a7c; color: #fff; font: 500 18px/24px Inter, sans-serif; text-align: center; flex: none; }
.bat { width: 36px; height: 32px; }
.extensions { grid-column: 6; display: flex; align-items: center; }
.badge { position: absolute; right: 4px; bottom: 0; width: 24px; height: 24px; border-radius: 3px; background: #6b3fbd; color: #fff; font: 600 18px/24px Inter, sans-serif; }
.abp { position: absolute; inset: 12px 0; color: #fff; font: 700 14px/32px "Open Sans", sans-serif; }
.b-ext { width: 32px; height: 32px; background: #fff; color: #7a6fd0; font: 700 18px/32px "Liberation Sans", sans-serif; }
.wallet { margin-left: 4px; margin-right: 14px; }
.profile { width: 44px; height: 44px; margin-right: 14px; }
.update {
  display: flex;
  align-items: center;
  justify-content: space-between;
  width: 235px;
  height: 56px;
  padding: 0 16px 0 14px;
  border: 2px solid #6dac7c;
  border-radius: 8px;
  background: #27323a;
  color: #81c995;
  font-size: 26px;
}
.update svg { width: 20px; height: 24px; stroke: #6dac7c; stroke-width: 4; }

/* bookmarks */
.bookmarks { display: flex; align-items: center; gap: 32px; height: 64px; padding: 0 29px 10px 28px; font-weight: 500; font-size: 24px; white-space: nowrap; }
.bookmarks a { display: flex; align-items: center; gap: 16px; }
.e-ico, .ef-ico { color: #fff; text-align: center; }
.e-ico { background: #3b82b8; font: 500 32px/32px Roboto, sans-serif; }
.ef-ico { background: #4d9ee8; font: italic 700 18px/32px "Open Sans", sans-serif; }
.more { margin-left: auto; margin-right: -12px; color: #a9bddd; font-size: 30px; }
.bookmarks .others { gap: 14px; height: 32px; padding-left: 19px; border-left: 2px solid #3f5980; }

/* page */
.page { position: relative; flex: 1; }
.map { position: relative; width: 50%; aspect-ratio: 1100 / 974; overflow: hidden; font-family: Roboto, sans-serif; }
.canvas { width: 100%; height: 100%; }
.roads path { fill: none; stroke: #ebebeb; stroke-width: 4px; stroke-linejoin: round; vector-effect: non-scaling-stroke; }
.water path { fill: #c8d7d4; }
.water .land { fill: #d6d6d6; }
.streams path { fill: none; stroke: #d2dfdc; stroke-width: 1px; vector-effect: non-scaling-stroke; }
.shields use { fill: #fff; stroke: #bdbdbd; stroke-width: 2px; }
.shields text { fill: #9e9e9e; font-size: 18px; text-anchor: middle; }
.places text { fill: #3c3c3c; font-size: 24px; text-anchor: middle; stroke: #fff; stroke-width: 4px; stroke-linejoin: round; paint-order: stroke; }
.places .end { text-anchor: end; }
.places .district { font-size: 20px; font-weight: 500; fill: #616161; letter-spacing: 2px; }
.places .town { font-size: 30px; font-weight: 500; fill: #2a2b2e; }
.places .city { font-size: 40px; font-weight: 500; fill: #202124; }
.brand { font: 500 34px "Open Sans", sans-serif; fill: #fff; stroke: #b5b5b5; stroke-width: 4px; paint-order: stroke; }
.pins use { fill: #ea4335; }
.pins circle { fill: #811411; }

.info-window {
  position: absolute;
  left: 455px;
  top: 172px;
  width: 346px;
  height: 227px;
  padding: 64px 24px 0;
  border-radius: 16px;
  background: #fff;
  filter: drop-shadow(0 4px 10px rgba(0, 0, 0, .4));
}
.info-window::after {
  content: "";
  position: absolute;
  left: 152px;
  top: 226px;
  border: 21px solid transparent;
  border-top-color: #fff;
  border-bottom: 0;
}
.info-window h2 { display: flex; align-items: center; gap: 7px; margin: 0; color: #000; font-size: 39px; line-height: 44px; font-weight: 700; }
.bear { width: 40px; height: 38px; }
.info-window p { margin: 36px 0 0; color: #333; font-size: 26px; line-height: 36px; font-weight: 300; white-space: nowrap; }
.close { position: absolute; right: 10px; top: 10px; }
.close svg { width: 16px; height: 16px; stroke: #666; stroke-width: 2; }

.zoom { position: absolute; right: 19px; bottom: 48px; width: 80px; display: flex; flex-direction: column; padding: 0 10px; border-radius: 4px; background: #fff; box-shadow: 0 1px 6px rgba(0, 0, 0, .3); }
.zoom button { display: flex; align-items: center; justify-content: center; height: 81px; }
.zoom button + button { border-top: 2px solid #e6e6e6; }
.zoom svg { width: 36px; height: 36px; stroke: #666; stroke-width: 8; }

.legal { position: absolute; right: 0; bottom: 0; display: flex; gap: 1px; height: 27px; font-size: 20px; line-height: 27px; color: #222; }
.legal > * { padding: 0 12px; background: rgba(245, 245, 245, .8); white-space: nowrap; }

.compass { position: absolute; right: 44px; top: 33px; }
.compass svg { width: 60px; height: 60px; }
```
